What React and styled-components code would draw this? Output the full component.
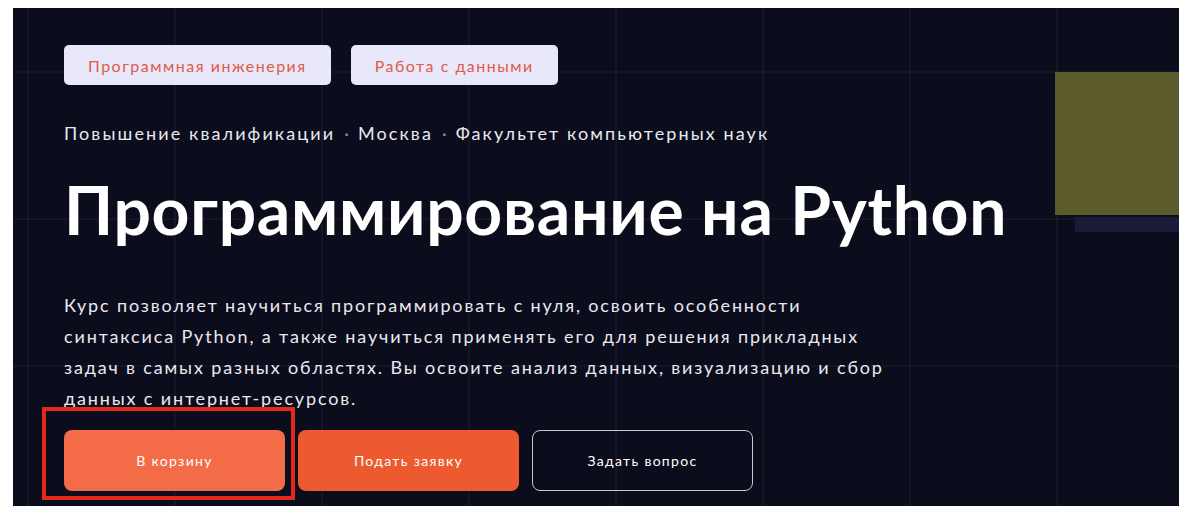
import React from 'react'
import styled, { createGlobalStyle } from 'styled-components'

const GlobalStyle = createGlobalStyle`
    html, body {
        margin:0;
        padding:0;
        background:#ffffff;
    }
    body {
        font-family:Lato, "Noto Sans", sans-serif;
    }
`

const tags = ['Программная инженерия', 'Работа с данными']
const meta = ['Повышение квалификации', 'Москва', 'Факультет компьютерных наук']

function App() {
    return (
        <>
            <GlobalStyle />
            <Page>
                <Hero>
                    <Decor />
                    <DecorStrip />
                    <Content>
                        <Tags>
                            {tags.map(t => <Tag key={t}>{t}</Tag>)}
                        </Tags>
                        <Meta>
                            {meta.map((m, i) => (
                                <React.Fragment key={m}>
                                    {i > 0 && <Dot>·</Dot>}
                                    <span>{m}</span>
                                </React.Fragment>
                            ))}
                        </Meta>
                        <Title>Программирование на Python</Title>
                        <Lead>
                            Курс позволяет научиться программировать с нуля, освоить особенности
                            синтаксиса Python, а также научиться применять его для решения прикладных
                            задач в самых разных областях. Вы освоите анализ данных, визуализацию и сбор
                            данных с интернет-ресурсов.
                        </Lead>
                        <Actions>
                            <Marked>
                                <Button $variant="light">В корзину</Button>
                            </Marked>
                            <Button $variant="primary">Подать заявку</Button>
                            <Button $variant="outline">Задать вопрос</Button>
                        </Actions>
                    </Content>
                </Hero>
            </Page>
        </>
    )
}

export default App

const Page = styled.div`
    padding:8px 0 0 13px;
    height:506px;
    box-sizing:border-box;
`

const Hero = styled.section`
    position:relative;
    height:498px;
    overflow:hidden;
    background-color:#0b0c1c;
    background-image:
        linear-gradient(to right, rgb(255 255 255 / 4%) 2px, transparent 2px),
        linear-gradient(to bottom, rgb(255 255 255 / 4%) 2px, transparent 2px);
    background-size:147px 147px;
    background-position:14px 63px;
`

const Decor = styled.div`
    position:absolute;
    top:64px;
    left:1042px;
    right:0;
    height:143px;
    background:#5b5a2a;
`

const DecorStrip = styled.div`
    position:absolute;
    top:209px;
    left:1062px;
    right:0;
    height:15px;
    background:#1b1a38;
`

const Content = styled.div`
    position:relative;
    display:flex;
    flex-direction:column;
    align-items:flex-start;
    padding:37px 0 0 51px;
`

const Tags = styled.div`
    display:flex;
    gap:20px;
`

const Tag = styled.div`
    height:40px;
    padding:0 24px;
    display:flex;
    align-items:center;
    background:#e8e8fa;
    color:#e05a48;
    border-radius:5px;
    font-size:16px;
    letter-spacing:1.5px;
`

const Meta = styled.div`
    margin-top:37px;
    display:flex;
    align-items:center;
    gap:9px;
    color:#e9e9f0;
    font-size:18px;
    letter-spacing:2.1px;
`

const Dot = styled.span`
    color:#8e8ea0;
    letter-spacing:0;
`

const Title = styled.h1`
    margin:24px 0 0;
    color:#ffffff;
    font-size:66px;
    font-weight:700;
    line-height:84px;
    letter-spacing:0.7px;
`

const Lead = styled.p`
    margin:38px 0 0;
    max-width:822px;
    color:#e9e9f0;
    font-size:18px;
    line-height:31px;
    letter-spacing:1.85px;
`

const Actions = styled.div`
    margin-top:16px;
    display:flex;
    gap:13px;
`

const Marked = styled.div`
    position:relative;
    display:flex;

    &::after{
        content:'';
        position:absolute;
        top:-23px;
        left:-22px;
        right:-10px;
        bottom:-9px;
        border:4px solid #e3291b;
        pointer-events:none;
    }
`

const Button = styled.button`
    width:221px;
    height:61px;
    border-radius:8px;
    font-family:inherit;
    font-size:14px;
    letter-spacing:1.3px;
    color:#ffffff;
    cursor:pointer;
    border:${p => p.$variant === 'outline' ? '1.5px solid #c9c9d4' : 'none'};
    background:${p =>
        p.$variant === 'light' ? '#f46c47' :
        p.$variant === 'primary' ? '#ee5a30' : 'transparent'};
`
